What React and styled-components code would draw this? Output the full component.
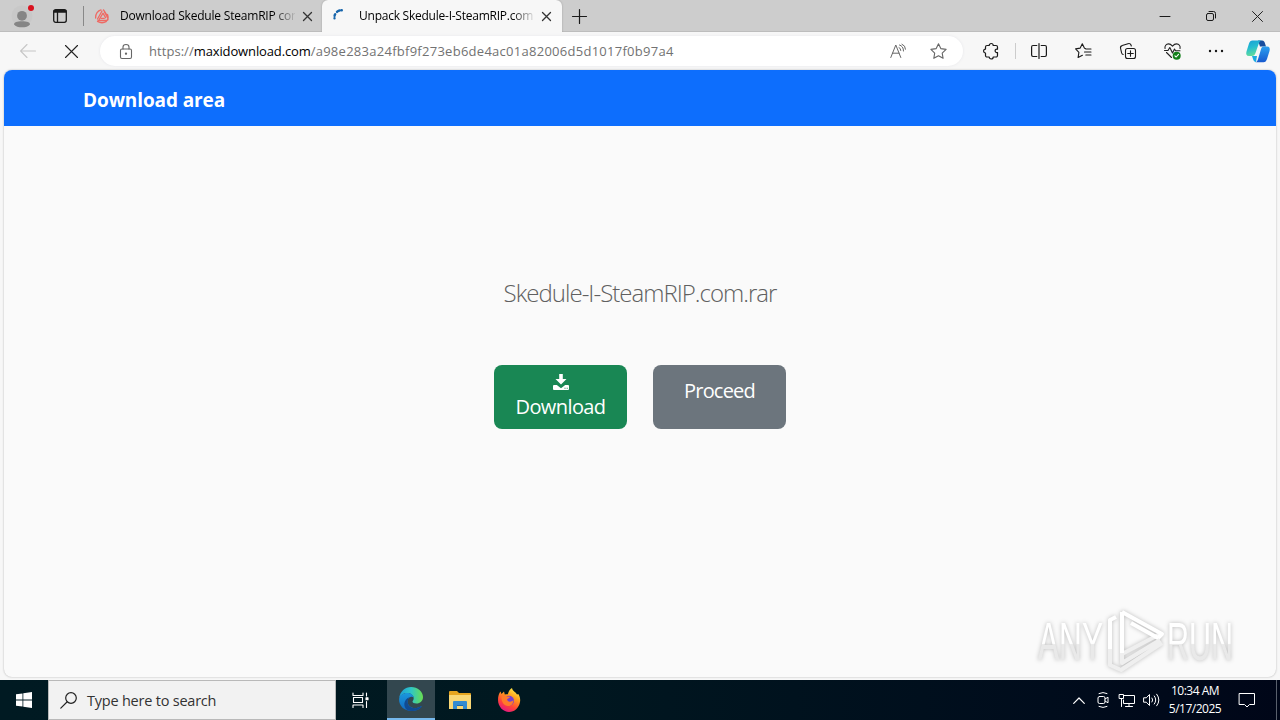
import React from 'react';
import styled, { createGlobalStyle } from 'styled-components';

const GlobalStyle = createGlobalStyle`
  * { box-sizing: border-box; }
  body { margin: 0; font-family: "Open Sans", "Noto Sans", sans-serif; overflow: hidden; }
  svg { display: block; flex: none; overflow: visible; }
`;

const Desktop = styled.div`
  width: 1280px; height: 720px; display: flex; flex-direction: column;
  background: #f7f7f7; position: relative; overflow: hidden;
`;
const TabStrip = styled.header`
  height: 32px; flex: none; display: flex; background: #cdcdcd;
  box-shadow: inset 0 -1px #bdbdbd;
`;
const Cell = styled.div`
  width: ${p => p.$w || 40}px; flex: none; height: 100%;
  display: flex; align-items: center; justify-content: center;
`;
const Separator = styled.div`
  width: 1px; height: ${p => p.$h}px; background: ${p => p.$color}; align-self: center; flex: none;
`;
const Tab = styled.div`
  width: ${p => p.$w}px; height: 32px; flex: none; display: flex; align-items: center;
  padding-left: ${p => p.$pad}px;
  background: ${p => (p.$active ? '#f7f7f7' : 'transparent')};
  border-radius: 6px 6px 0 0;
  box-shadow: ${p => (p.$active ? '0 0 2px #999' : 'none')};
  clip-path: inset(0 -3px 0 -3px);
`;
const TabTitle = styled.span`
  width: 175px; margin-left: ${p => p.$gap}px; white-space: nowrap; color: #000;
  font-size: 12px; line-height: 20px; letter-spacing: ${p => p.$ls}px;
  mask-image: linear-gradient(90deg, #000 153px, transparent 177px);
`;
const TabClose = styled.div`margin-left: ${p => p.$gap}px;`;
const Spacer = styled.div`flex: 1;`;
const Toolbar = styled.nav`
  height: 38px; flex: none; display: flex; align-items: center; padding: 0 2px 0 8px; background: #f7f7f7;
`;
const AddressBar = styled.div`
  width: 863px; height: 30px; margin: 0 8px 0 6px; border-radius: 15px; background: #fff;
  box-shadow: 0 0 3px #e6e6ea; display: flex; align-items: center; padding-left: 17px; padding-right: 5px;
`;
const Url = styled.span`
  margin-left: 15px; font-size: 13px; line-height: 20px; color: #727272; white-space: nowrap;
  letter-spacing: 0.27px;
  b { font-weight: 400; color: #000; letter-spacing: -0.13px; }
`;
const Scheme = styled.span`letter-spacing: 0.05px;`;
const Page = styled.main`
  height: 607px; flex: none; margin: 0 4px; border-radius: 8px; background: #fafafa;
  box-shadow: 0 0 2px #aaa; overflow: hidden; display: flex; flex-direction: column; align-items: center;
`;
const PageHeader = styled.div`
  width: 100%; height: 56px; background: #0d6efd; padding: 16px 0 0 79px;
  color: #fff; font-size: 19px; line-height: 28px; font-weight: 700;
  letter-spacing: -0.1px; white-space: nowrap;
`;
const FileName = styled.h1`
  margin: 149px 0 0; font-size: 24px; line-height: 36px; font-weight: 300; color: #606060;
  letter-spacing: -0.99px; white-space: nowrap;
`;
const Actions = styled.div`display: flex; gap: 26px; margin-top: 54px;`;
const ActionButton = styled.button`
  width: 133px; height: 64px; border: 0; border-radius: 8px; padding: ${p => p.$top}px 0 0;
  background: ${p => p.$bg}; color: #fff; font: 400 20px/24px "Open Sans", sans-serif;
  letter-spacing: ${p => p.$ls}px;
  display: flex; flex-direction: column; align-items: center; gap: 5px;
`;
const Watermark = styled.div`
  position: absolute; left: 1030px; top: 601px;
  filter: drop-shadow(0 0 2px rgba(0,0,0,.25));
`;
const Taskbar = styled.footer`
  height: 40px; margin-top: 3px; flex: none; display: flex; color: #fff;
  background: linear-gradient(90deg, #001a22 0, #001820 540px, #000c1c 1050px, #000618 1280px);
`;
const SearchBox = styled.div`
  width: 288px; height: 40px; display: flex; align-items: center; padding-left: 11px;
  background: #f2f2f2; border: 1px solid #b9b9b9; color: #333; font-size: 14.5px;
  letter-spacing: -0.22px;
  span { margin-left: 10px; white-space: nowrap; }
`;
const ActiveApp = styled(Cell)`background: #33474f; border-bottom: 2px solid #76b9ed;`;
const Clock = styled.div`
  width: 64px; text-align: center; font-size: 12px; line-height: 18px; padding-top: 2px;
  letter-spacing: -0.5px; white-space: nowrap;
`;
const DesktopEdge = styled.div`width: 4px; margin-left: 9px; border-left: 1px solid #59606c;`;

const Line = ({ w = 16, h = w, c = '#1a1a1a', sw = 1, children }) => (
  <svg width={w} height={h} viewBox={`0 0 ${w} ${h}`} fill="none" stroke={c} strokeWidth={sw}
    strokeLinecap="round" strokeLinejoin="round">{children}</svg>
);
const Cross = ({ s = 9, c = '#222', sw = 1.3 }) => (
  <Line w={s} c={c} sw={sw}><path d={`M.5.5l${s - 1} ${s - 1}M${s - 0.5}.5l-${s - 1} ${s - 1}`} /></Line>
);

const Avatar = () => (
  <svg width="22" height="24" viewBox="0 0 22 24">
    <circle cx="11" cy="12" r="10.5" fill="#c8c8c8" />
    <circle cx="11" cy="11.8" r="4.9" fill="#858585" />
    <path d="M3 20.500c0-2 3-3.200 8-3.200s8 1.200 8 3.200c-1.500 2-4.500 2.800-8 2.800s-6.500-.8-8-2.800z" fill="#858585" />
    <circle cx="20" cy="4" r="3" fill="#d9121f" />
  </svg>
);
const Workspace = () => (
  <Line w={14} sw={1.3}><rect x=".7" y=".7" width="12.600" height="12.600" rx="2" /><path d="M1 3h12M4.500 3v10" /><path d="M1.500 2h11" strokeWidth="2.200" /></Line>
);
const SwirlIcon = () => (
  <Line w={14} c="#ee6a64" sw={1.3}>
    <path d="M.6 9C.2 5 3 1.500 6 .8M2.500 10 7 2M8.500.9l4.700 7.300M4.200 10.500 8 4.200l2.600 4.500M9.500 3l3.500 6.500q.5 2-2 2H3M12.500 5.500q1.500 4-1 6.300M2.500 12.500q4.500 2.500 9 0M6.300 9.300h3" />
  </Line>
);
const Spinner = () => (
  <Line w={14} c="#1765ab" sw={2.4}><path d="M8.800 1.300h-.3M6.500 1.500q-1.500.3-2.500 1.400M2.200 5.200q-.5.800-.6 1.600M1.500 9.200v.1" /></Line>
);
const Extensions = () => (
  <Line w={16} sw={1.2}>
    <path d="M4 2.500h2.200a2 2 0 0 1 4 0H13a1.500 1.500 0 0 1 1.500 1.500v2.200c-3.200-.8-3.200 4 0 3.300V12.500A1.500 1.500 0 0 1 13 14H10.200a2 2 0 0 1-4 0H4a1.500 1.500 0 0 1-1.500-1.500V10c-2.500 0-2.500-3.900 0-3.900V4A1.500 1.500 0 0 1 4 2.500z" />
  </Line>
);
const Favorites = () => (
  <Line w={17} h={16} sw={1.1}>
    <path d="M10.500 5.500 9.500 5.300 7.300.8 5.200 5.100.6 5.900l3.300 3.400-.8 5.200 4.300-2.200M10.800 6H16M9.500 9H16M10.800 12H16" />
  </Line>
);
const Collections = () => (
  <Line w={16} sw={1.1}>
    <rect x="5.500" y="5.500" width="10" height="10" rx="2" /><path d="M10.500 7.700v5.600M7.700 10.500h5.600" />
    <path d="M3.200 11.500c-1 0-1.300-.7-1.600-1.600L.6 5.500c-.4-1.500.2-2.500 1.600-2.900L8 .7c1.500-.4 2.500 0 3 1.300l.3 1" />
  </Line>
);
const Health = () => (
  <svg width="17" height="17" viewBox="0 0 17 17" fill="none" stroke="#222" strokeWidth="1.100" strokeLinecap="round" strokeLinejoin="round">
    <path d="M1 5.500C.5 3 2.200.9 4.500.9c2 0 3 1.100 4 2.200C9.500 2 10.600.9 12.500.9 15 .9 16.700 3 16 5.500M.5 7.500H4l1.800-3L8.500 10l2-4 1 1.700h4.500M2.500 9.500l5 5" />
    <circle cx="12.700" cy="12.700" r="4" fill="#13801b" stroke="none" />
    <path d="m10.900 12.800 1.300 1.200 2.300-2.600" stroke="#fff" />
  </svg>
);
const Copilot = () => (
  <svg width="24" height="23" viewBox="0 0 24 23">
    <defs>
      <linearGradient id="cpa" x1="0" y1="0" x2=".3" y2="1"><stop stopColor="#169fd7" /><stop offset=".5" stopColor="#25bdd0" /><stop offset="1" stopColor="#62dc9b" /></linearGradient>
      <linearGradient id="cpb" x1="0" y1="0" x2="0" y2="1"><stop stopColor="#2a9ff0" /><stop offset="1" stopColor="#1759cf" /></linearGradient>
    </defs>
    <path d="M12 .5h4c2 0 2.500 1.400 3 3l1 3h-6z" fill="#174d9e" />
    <path d="M6.500.5H16c-2 0-2.700 1.500-3.200 3L9.500 13c-.7 2-1.500 3-3.700 3H3c-2.500 0-3.300-2-2.500-4.500l2.500-8C3.700 1.500 4.700.5 6.500.5z" fill="url(#cpa)" />
    <path d="M6 16h5l-1 6c-1.700-.3-2.500-1.300-3-3z" fill="#1cace0" />
    <path d="M17.500 6.500H21c2.500 0 3.300 2 2.500 4.500l-2.500 8c-.7 2-1.700 3.300-3.500 3.300H9c2 0 2.500-1.500 3-3l3-10c.5-1.800 1.200-2.800 2.500-2.800z" fill="url(#cpb)" />
  </svg>
);
const DownloadGlyph = () => (
  <svg width="16" height="16" viewBox="0 0 16 16" fill="#fff">
    <path d="M6.200 0h3.600v5h3.700L8 10.500 2.500 5h3.700z" />
    <path fillRule="evenodd" d="M1 11h2.800L8 14.200l4.200-3.200H15q1 0 1 1v3q0 1-1 1H1q-1 0-1-1v-3q0-1 1-1zM11.500 13.800v1h1v-1zM13.700 13.800v1h1v-1z" />
  </svg>
);
const AnyRunLogo = () => (
  <svg width="250" height="74" viewBox="0 0 250 74">
    <defs><linearGradient id="wm" x1="0" y1="0" x2="0" y2="1"><stop offset=".54" stopColor="#fff" /><stop offset=".56" stopColor="#e9e9e9" /></linearGradient></defs>
    <g fill="url(#wm)" fontFamily="Liberation Sans" fontSize="54">
      <text x="8" y="59" textLength="65" lengthAdjust="spacingAndGlyphs">ANY</text>
      <text x="137" y="59" textLength="66" lengthAdjust="spacingAndGlyphs">RUN</text>
    </g>
    <g fill="none" strokeWidth="4" strokeLinejoin="round">
      <path d="M92 53 130 33" stroke="#efefef" />
      <path d="M80 50V19l6-3M92 11v43M92 11l40 22-4 4-27-15" stroke="#fff" />
      <path d="M80 48v16l11 5 41-27M92 52v10l38-23" stroke="#efefef" />
    </g>
  </svg>
);
const WindowsLogo = () => (
  <svg width="16" height="16" viewBox="0 0 16 16" fill="#fff"><path d="M0 2.300 6.500 1.400v6.200H0zM7.300 1.200 16 0v7.600H7.300zM0 8.400h6.500v6.200L0 13.700zM7.300 8.400H16V16l-8.700-1.200z" /></svg>
);
const TaskView = () => (
  <Line w={17} c="#fff" sw={1.1}><path d="M1 1v2.500h10V1M1 15.500V13h10v2.500M1.500 5.500h9v5h-9zM14.500 1v3M14.500 9.500v6" /><rect x="14" y="5.800" width="2" height="2" fill="#fff" /></Line>
);
const EdgeLogo = () => (
  <svg width="24" height="24" viewBox="0 0 24 24">
    <defs>
      <linearGradient id="eg"><stop stopColor="#1c9ed8" /><stop offset=".5" stopColor="#2fc6c6" /><stop offset="1" stopColor="#69de50" /></linearGradient>
      <linearGradient id="eb" x1="0" y1="0" x2="0" y2="1"><stop stopColor="#1a98dd" /><stop offset="1" stopColor="#1268c0" /></linearGradient>
    </defs>
    <path d="M.2 11C1 4.500 6 0 12.200 0 18.700 0 24 4.600 24 10c0 4-3 6.500-6.500 6.500-2.500 0-4-1-4-2 0-.7 1.200-1.300 1.200-3.300C14.700 8 11.500 6 8 6 4.500 6 1.500 8 .2 11z" fill="url(#eg)" />
    <path d="M.1 12C.5 8.500 4 6 8 6c3.500 0 6.500 1.800 6.700 4.800-1-1.300-3-1.300-4.500 0-3.500 3-1.500 9.200 4 10.200 3 .5 5.800-.5 7.500-1.700.6-.4 1.100.1.700.7C20.200 22.500 16.500 24 12.500 24 5.500 24-.3 19 .1 12z" fill="url(#eb)" />
    <path d="M8.200 23.200C2.500 18 6 10.200 12.800 9.700c-2 .3-3.600 1.400-4.100 3.700-.7 4 2 7.200 6.300 7.700 2.500.3 5-.6 6.700-1.800.6-.4 1.100.1.700.7C19.500 23.700 13.500 25 8.200 23.200z" fill="#114a91" />
  </svg>
);
const FolderIcon = () => (
  <svg width="22" height="19" viewBox="0 0 22 19">
    <path d="M0 1q0-1 1-1h7l2 2h11q1 0 1 1v15H0z" fill="#e6a51f" /><path d="M0 4h22v14H0z" fill="#f9d775" />
    <path d="M4 11q0-1 1-1h12q1 0 1 1v7h-4v-4H8v4H4z" fill="#338bd1" /><path d="M8 14h6v1H8z" fill="#1b68aa" />
  </svg>
);
const FirefoxLogo = () => (
  <svg width="24" height="24" viewBox="0 0 24 24">
    <defs>
      <linearGradient id="ff" x1=".8" y1="0" x2=".3" y2="1"><stop stopColor="#fff44f" /><stop offset=".35" stopColor="#ffa11c" /><stop offset=".7" stopColor="#ff4338" /><stop offset="1" stopColor="#e31587" /></linearGradient>
    </defs>
    <path d="M1 12C1 8 2 5.500 3.500 3.500l1 2.500L7 3.500l.8 3c1.500-.5 3-.3 3-.3C11.500 3.500 12.800 1.300 15 0c.3 3 4 4 5 6.500l1.300-.5C23 9 23.500 11 23 14c-1 6-5.600 10-11 10S1 19 1 12z" fill="url(#ff)" />
    <circle cx="12" cy="12.800" r="5" fill="#7540cf" />
    <path d="M4.500 8.500c2-1.500 4-1.200 5.500 0l3 .3c0 1.500-2.500 1.500-3 2.700 1 3 4.500 2.500 6.500.5-.3 4-2.500 6.300-5.500 6-4-.3-6.800-4-6.500-9.500z" fill="#ff7b29" />
  </svg>
);

export default function App() {
  return (
    <Desktop>
      <GlobalStyle />
      <TabStrip>
        <Cell $w={44}><Avatar /></Cell>
        <Cell $w={32}><Workspace /></Cell>
        <Cell $w={14}><Separator $h={20} $color="#888" /></Cell>
        <Tab $w={232} $pad={5}>
          <SwirlIcon /><TabTitle $gap={11} $ls={-0.2}>Download Skedule SteamRIP com</TabTitle><TabClose $gap={8}><Cross c="#333" /></TabClose>
        </Tab>
        <Tab $active $w={240} $pad={11}>
          <Spinner /><TabTitle $gap={12} $ls={-0.24}>Unpack Skedule-I-SteamRIP.com</TabTitle><TabClose $gap={8}><Cross c="#333" /></TabClose>
        </Tab>
        <Cell $w={35}><Line w={15} sw={1.2}><path d="M7.500.5v14M.5 7.500h14" /></Line></Cell>
        <Spacer />
        <Cell $w={46}><Line w={10}><path d="M0 5.500h10" /></Line></Cell>
        <Cell $w={46}><Line w={10}><rect x=".5" y="2.500" width="7" height="7" rx="1.500" /><path d="M3 .5h4.500a2 2 0 0 1 2 2V7" /></Line></Cell>
        <Cell $w={46}><Cross s={11} sw={1} /></Cell>
      </TabStrip>
      <Toolbar>
        <Cell><Line w={16} c="#c6c6c6" sw={1.1}><path d="M15.500 8H.8M7 1.500.6 8 7 14.500" /></Line></Cell>
        <Cell $w={46}><Cross s={13} sw={1.1} /></Cell>
        <AddressBar>
          <Cell $w={17}><Line w={12} h={15} c="#666" sw={1.1}><rect x=".5" y="5" width="11" height="9.500" rx="1.500" /><path d="M3 5V3a3 2.500 0 0 1 6 0v2" /><circle cx="6" cy="9.700" r=".6" fill="#666" /></Line></Cell>
          <Url><Scheme>https://</Scheme><b>maxidownload.com</b>/a98e283a24fbf9f273eb6de4ac01a82006d5d1017f0b97a4</Url>
          <Spacer />
          <Cell><Line w={16} h={14} c="#666"><path d="m.8 13.500 5-12.500 5 12.500M2.500 9.200h6.600M9 3.500q1.800.6 1.800 3M9.500 1q4 1 4 6M12 .2q3.500 1.300 3.500 5" /></Line></Cell>
          <Cell><Line w={17} h={16} c="#666" sw={1.1}><path d="m8.500.8 2.300 4.800 5.300.8-3.900 3.700.9 5.200-4.600-2.500-4.700 2.500.9-5.200L.9 6.400l5.300-.8z" /></Line></Cell>
        </AddressBar>
        <Cell><Extensions /></Cell>
        <Cell $w={8}><Separator $h={16} $color="#ccc" /></Cell>
        <Cell><Line w={16} h={16} sw={1.2}><path d="M8 .5v15M5.800 2.500H2a1.400 1.400 0 0 0-1.400 1.400v8.200A1.400 1.400 0 0 0 2 13.500h3.800M10.200 2.500H14a1.400 1.400 0 0 1 1.400 1.400v8.200a1.400 1.400 0 0 1-1.400 1.400h-3.800" /></Line></Cell>
        <Cell $w={49}><Favorites /></Cell>
        <Cell><Collections /></Cell>
        <Cell $w={48}><Health /></Cell>
        <Cell><Line w={14} h={4} sw={2.4}><path d="M1 2h.01M7 2h.01M13 2h.01" /></Line></Cell>
        <Spacer />
        <Cell><Copilot /></Cell>
      </Toolbar>
      <Page>
        <PageHeader>Download area</PageHeader>
        <FileName>Skedule-I-SteamRIP.com.rar</FileName>
        <Actions>
          <ActionButton $bg="#198754" $top={9} $ls={-0.6}><DownloadGlyph />Download</ActionButton>
          <ActionButton $bg="#6c757d" $top={14} $ls={-0.8}>Proceed</ActionButton>
        </Actions>
      </Page>
      <Taskbar>
        <Cell $w={48}><WindowsLogo /></Cell>
        <SearchBox>
          <Line w={17} h={17} c="#222" sw={1.2}><circle cx="11" cy="6" r="5.300" /><path d="M7 10 .8 16.200" /></Line>
          <span>Type here to search</span>
        </SearchBox>
        <Cell $w={48}><TaskView /></Cell>
        <Cell $w={3} />
        <ActiveApp $w={48}><EdgeLogo /></ActiveApp>
        <Cell $w={50}><FolderIcon /></Cell>
        <Cell $w={48}><FirefoxLogo /></Cell>
        <Spacer />
        <Cell $w={24}><Line w={12} h={7} c="#fff" sw={1.2}><path d="m.7 6.300 5.300-5.300 5.300 5.300" /></Line></Cell>
        <Cell $w={24}><Line w={12} h={16} c="#fff"><rect x="1" y="4.500" width="7" height="7" rx="1.500" /><path d="m8 7 3-1.800v5.600L8 9M2 1.500q4-2 8 0M2 14.500q4 2 8 0" /></Line></Cell>
        <Cell $w={24}><Line w={16} h={14} c="#fff"><path d="M5 2.500h10.500v8H4.500V7M10 10.500v3M6.500 13.500h7M.5 1.500h4v4h-4zM2.500 5.500v8" /></Line></Cell>
        <Cell $w={24}><Line w={17} h={14} c="#fff"><path d="M1 4.800h2.300L6.500 1.500v11L3.300 9.200H1zM9 5q1.500 2 0 4M11.300 3q3 4 0 8M13.700 1.200q4.500 5.800 0 11.600" /></Line></Cell>
        <Clock>10:34 AM<br />5/17/2025</Clock>
        <Cell $w={40}><Line w={16} h={16} c="#fff"><path d="M.5 1.500h15v11h-5L8 15l-2.500-2.500h-5z" /></Line></Cell>
        <DesktopEdge />
      </Taskbar>
      <Watermark><AnyRunLogo /></Watermark>
    </Desktop>
  );
}
